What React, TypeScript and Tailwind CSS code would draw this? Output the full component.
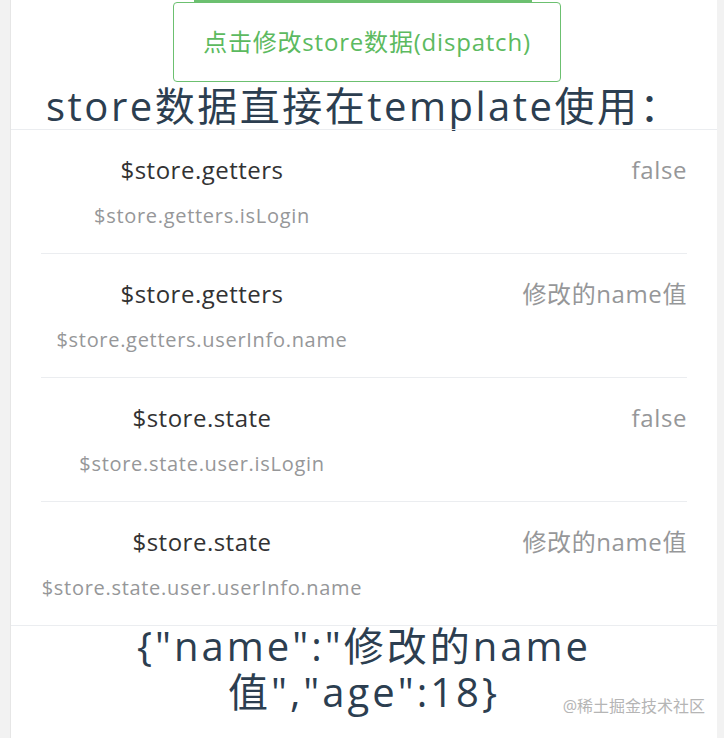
import React from "react";

const font = {
  fontFamily: '"Open Sans", "Noto Sans CJK SC", sans-serif',
};

const rows = [
  { title: "$store.getters", label: "$store.getters.isLogin", value: "false" },
  { title: "$store.getters", label: "$store.getters.userInfo.name", value: "修改的name值" },
  { title: "$store.state", label: "$store.state.user.isLogin", value: "false" },
  { title: "$store.state", label: "$store.state.user.userInfo.name", value: "修改的name值" },
];

function Cell({ title, label, value, last }: { title: string; label: string; value: string; last?: boolean }) {
  return (
    <div className="px-[30px]">
      <div className={"flex items-start pt-[20px] pb-[20px] " + (last ? "" : "border-b border-[#ebedf0]")}>
        <div className="w-[322px] flex flex-col items-center shrink-0">
          <span className="text-[24px] leading-[40px] tracking-[0.5px] text-[#323233] whitespace-nowrap">{title}</span>
          <span className="mt-[9px] text-[20px] leading-[34px] tracking-[0.7px] text-[#969799] whitespace-nowrap">{label}</span>
        </div>
        <div className="flex-1 text-right text-[24px] leading-[40px] tracking-[0.6px] text-[#969799] whitespace-nowrap">{value}</div>
      </div>
    </div>
  );
}

export default function App() {
  return (
    <div className="h-[738px] w-[724px] overflow-hidden bg-[#f2f2f2] flex" style={font}>
      <div className="w-[11px] shrink-0 border-r border-[#e6e6e6]" />
      <div className="relative w-[706px] shrink-0 bg-white flex flex-col">
        {/* bottom edge of the previous button */}
        <div className="h-[2px] w-[338px] ml-[183px] bg-[#6cc070]" />
        <div className="flex justify-center">
          <button className="w-[388px] h-[80px] ml-[6px] rounded-[4px] border-[1.5px] border-[#6cc070] bg-white text-[24px] tracking-[0.8px] text-[#5cba60]">
            点击修改store数据(dispatch)
          </button>
        </div>
        <h1 className="text-center text-[40px] leading-[47px] tracking-[2.5px] text-[#2c3e50] whitespace-nowrap">
          store数据直接在template使用：
        </h1>
        <div className="border-t border-b border-[#ebedf0]">
          {rows.map((r, i) => (
            <Cell key={i} {...r} last={i === rows.length - 1} />
          ))}
        </div>
        <div className="-mt-[3px] text-center text-[40px] tracking-[3px] text-[#2c3e50]">
          <div className="leading-[46px]">{'{"name":"修改的name'}</div>
          <div className="leading-[46px]">{'值","age":18}'}</div>
        </div>
        <span className="absolute right-[12px] bottom-[20px] text-[16px] text-[#b5b5b5]">@稀土掘金技术社区</span>
      </div>
    </div>
  );
}
